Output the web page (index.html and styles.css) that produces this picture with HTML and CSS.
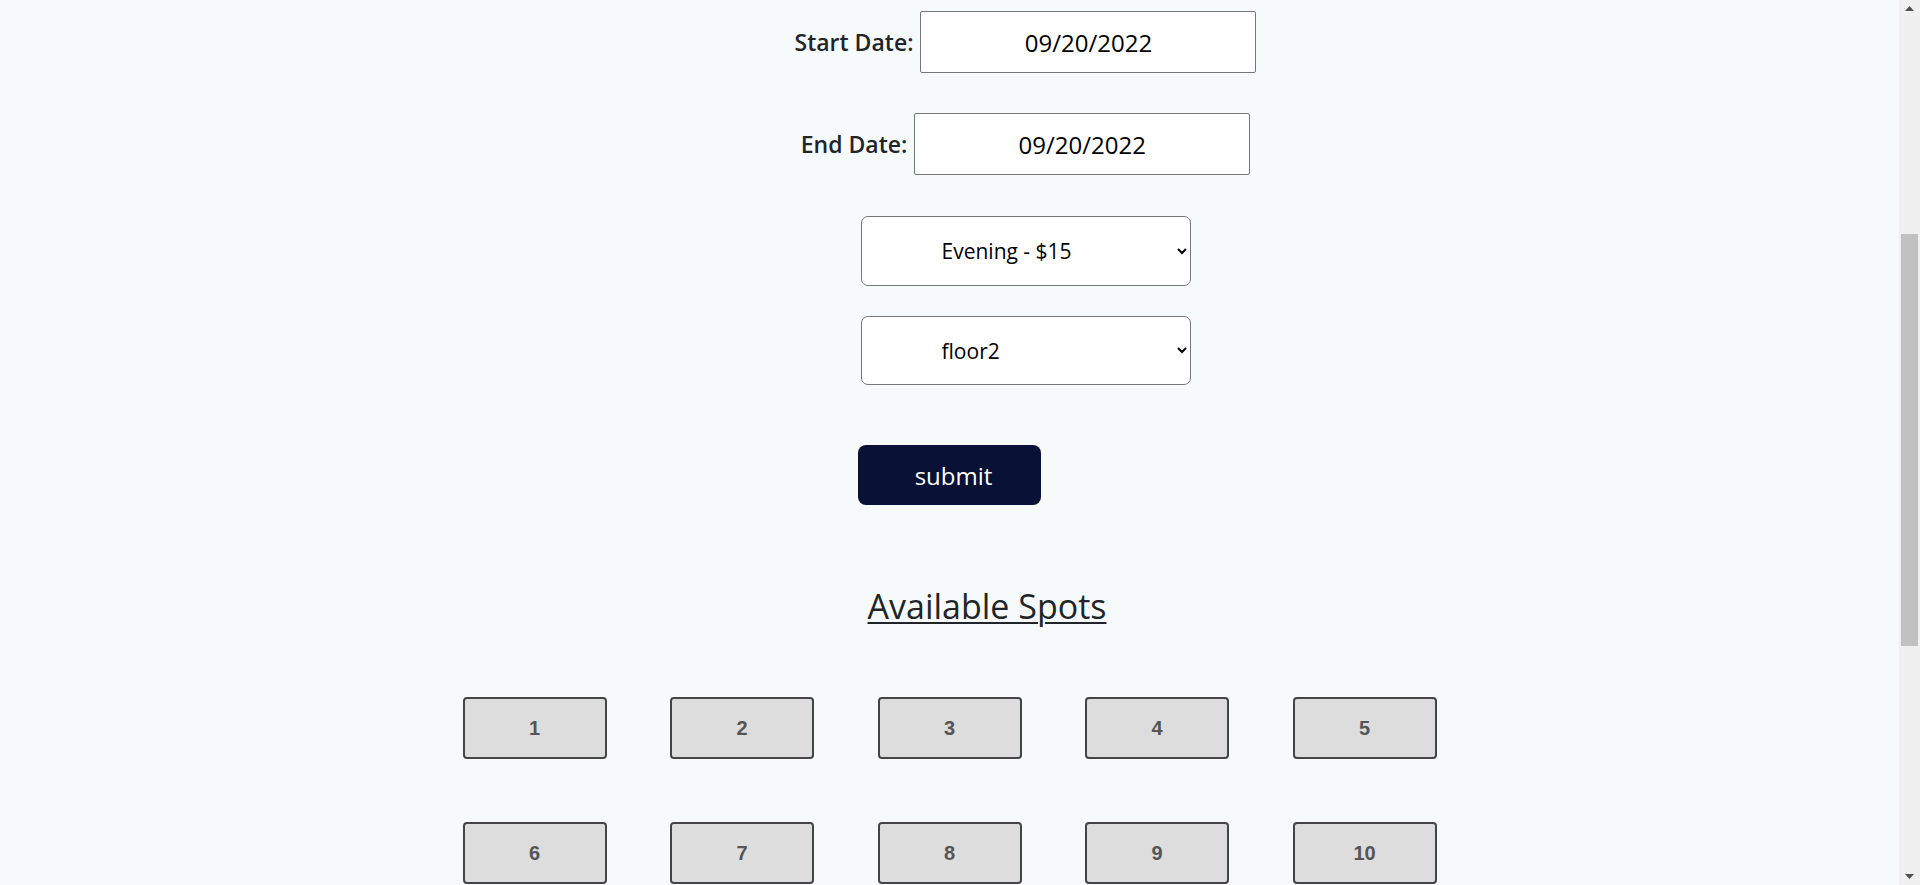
FILE: index.html
```html
<!DOCTYPE html>
<html lang="en">
<head>
<meta charset="utf-8">
<title>Parking Booking</title>
<link rel="stylesheet" href="styles.css">
</head>
<body>
<main class="page">
  <form class="booking">
    <div class="fields">
      <div class="date-row">
        <label class="date-label" for="start">Start Date:</label>
        <input id="start" class="date-input" type="text" value="09/20/2022">
      </div>
      <div class="date-row date-row-end">
        <label class="date-label" for="end">End Date:</label>
        <input id="end" class="date-input" type="text" value="09/20/2022">
      </div>
      <select class="choice choice-rate">
        <option>Evening - $15</option>
      </select>
      <select class="choice choice-floor">
        <option>floor2</option>
      </select>
    </div>
    <div class="actions">
      <button class="submit" type="button">submit</button>
    </div>
  </form>
  <section class="spots">
    <h2 class="spots-title">Available Spots</h2>
    <div class="spot-grid">
      <button class="spot" type="button">1</button>
      <button class="spot" type="button">2</button>
      <button class="spot" type="button">3</button>
      <button class="spot" type="button">4</button>
      <button class="spot" type="button">5</button>
      <button class="spot" type="button">6</button>
      <button class="spot" type="button">7</button>
      <button class="spot" type="button">8</button>
      <button class="spot" type="button">9</button>
      <button class="spot" type="button">10</button>
    </div>
  </section>
</main>
<div class="scrollbar" aria-hidden="true">
  <div class="scroll-btn">
    <svg width="9" height="5" viewBox="0 0 9 5"><polygon points="0,5 4.5,0 9,5" fill="#505050"/></svg>
  </div>
  <div class="scroll-track">
    <div class="scroll-thumb"></div>
  </div>
  <div class="scroll-btn">
    <svg width="9" height="5" viewBox="0 0 9 5"><polygon points="0,0 4.5,5 9,0" fill="#505050"/></svg>
  </div>
</div>
</body>
</html>
```

FILE: styles.css
```css
html {
  background: #f7fafb;
}

body {
  margin: 0;
  background: #f7fafb;
  color: #212529;
  font-family: "Open Sans", "Noto Sans", sans-serif;
}

.page {
  margin-right: 21px;
  padding: 11px 0 40px;
}

/* browser scrollbar (page is scrolled part-way down) */
.scrollbar {
  position: fixed;
  top: 0;
  right: 0;
  width: 21px;
  height: 100vh;
  background: #f0f0f0;
  display: flex;
  flex-direction: column;
}

.scroll-btn {
  height: 17px;
  display: flex;
  align-items: center;
  justify-content: center;
  flex: none;
}

.scroll-btn svg {
  display: block;
}

.scroll-track {
  flex: 1;
  display: flex;
  flex-direction: column;
}

.scroll-thumb {
  margin: 217px 2px 0;
  height: 412px;
  background: #c1c1c1;
}

.booking {
  display: flex;
  flex-direction: column;
}

.fields {
  display: flex;
  flex-direction: column;
  align-items: center;
  padding-left: 152px;
}

.date-row {
  display: flex;
  align-items: center;
  gap: 7px;
  height: 62px;
}

.date-row-end {
  margin-top: 40px;
}

.date-label {
  font-size: 23px;
  font-weight: 600;
  color: #212529;
}

.date-input {
  box-sizing: border-box;
  width: 336px;
  height: 62px;
  border: 1px solid #767676;
  border-radius: 2px;
  background: #fff;
  color: #000;
  font-family: "Open Sans", "Noto Sans", sans-serif;
  font-size: 24px;
  text-align: center;
  padding: 0 4px;
}

.choice {
  box-sizing: border-box;
  width: 330px;
  border: 1px solid #767676;
  border-radius: 7px;
  background-color: #fff;
  color: #000;
  font-family: "Open Sans", "Noto Sans", sans-serif;
  font-size: 21px;
  padding: 0 8px 0 76px;
}

.choice-rate {
  margin-top: 41px;
  height: 70px;
}

.choice-floor {
  margin-top: 30px;
  height: 69px;
}

.actions {
  display: flex;
  justify-content: center;
  margin-top: 60px;
}

.submit {
  width: 183px;
  height: 60px;
  border: none;
  border-radius: 8px;
  background: #0a1137;
  color: #fff;
  font-family: "Open Sans", "Noto Sans", sans-serif;
  font-size: 24px;
  padding: 0 0 0 8px;
}

.spots {
  display: flex;
  flex-direction: column;
  align-items: center;
}

.spots-title {
  margin: 79px 0 0;
  padding-left: 75px;
  font-size: 34px;
  line-height: 44px;
  font-weight: 400;
  color: #212529;
  text-decoration: underline;
  text-decoration-thickness: 2px;
  text-underline-offset: 3px;
}

.spot-grid {
  margin-top: 69px;
  display: grid;
  grid-template-columns: repeat(5, 144px);
  column-gap: 63.5px;
  row-gap: 63px;
}

.spot {
  box-sizing: border-box;
  height: 62px;
  border: 2px solid #444;
  border-radius: 4px;
  background: #dddddd;
  color: #555;
  font-family: "Liberation Sans", Arial, sans-serif;
  font-size: 20px;
  font-weight: 700;
}
```
